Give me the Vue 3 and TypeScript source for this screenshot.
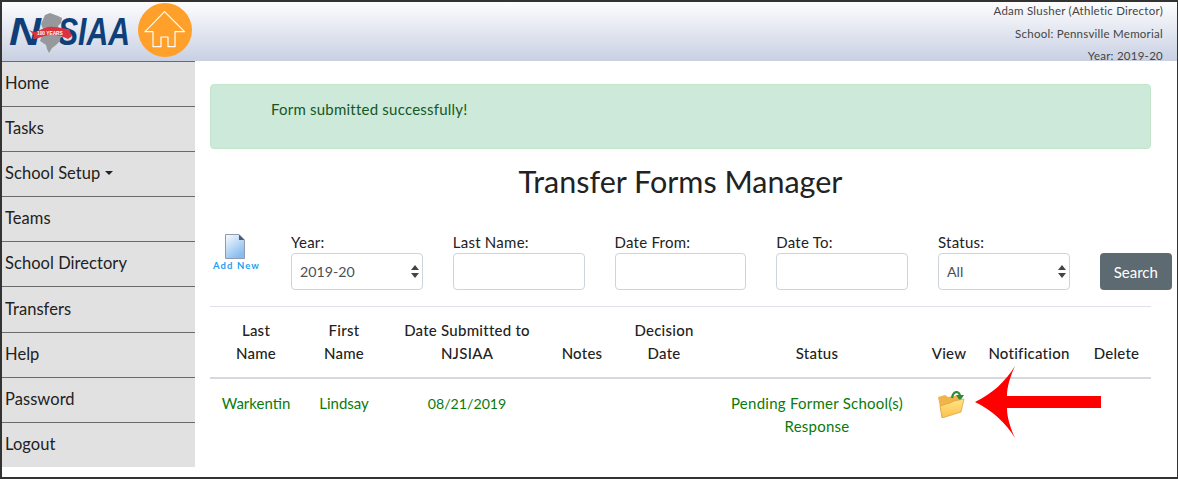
<script setup lang="ts">
const nav: string[] = ['Home', 'Tasks', 'School Setup', 'Teams', 'School Directory', 'Transfers', 'Help', 'Password', 'Logout']
const filters = [
  { label: 'Last Name' },
  { label: 'Date From' },
  { label: 'Date To' }
]
const heads: { lines: string[]; w: number }[] = [
  { lines: ['Last', 'Name'], w: 92 },
  { lines: ['First', 'Name'], w: 84 },
  { lines: ['Date Submitted to', 'NJSIAA'], w: 162 },
  { lines: ['Notes'], w: 68 },
  { lines: ['Decision', 'Date'], w: 96 },
  { lines: ['Status'], w: 210 },
  { lines: ['View'], w: 54 },
  { lines: ['Notification'], w: 106 },
  { lines: ['Delete'], w: 69 }
]
</script>

<template>
  <div class="frame">
    <header class="topbar">
      <div class="brand">
        <svg class="logo" width="124" height="42" viewBox="0 0 124 42">
          <text class="logo-text" x="0" y="33" textLength="32" lengthAdjust="spacingAndGlyphs">N</text>
          <text class="logo-text" x="49" y="33" textLength="72" lengthAdjust="spacingAndGlyphs">SIAA</text>
          <path class="state" d="M36 3 L41 1 L49 4 L53 6 L52 11 L49 14 L50 18 L52 22 L51 29 L47 33 L43 36 L40 41 L38 37 L37 33 L31 29 L33 23 L34 17 L32 12 Z" />
          <path class="ribbon" d="M20 18 L25 20 C32 19 36 14 44 15 C50 15 56 17 60 17 L63 24 L59 27 C54 25 48 22 42 23 C34 23 30 27 24 27 L25 23 Z" />
          <text class="ribbon-text" x="28" y="23">100 YEARS</text>
        </svg>
        <svg class="home" width="54" height="54" viewBox="0 0 54 54">
          <circle cx="27" cy="27" r="27" fill="#ffa02b" />
          <path d="M26.5 8.7 L46.5 28.7 H37 V43.7 H30 V34 H23 V43.7 H15 V28.7 H7 Z" fill="none" stroke="#fff" stroke-width="1.2" stroke-linejoin="round" />
        </svg>
      </div>
      <div class="user">
        <p>Adam Slusher (Athletic Director)</p>
        <p>School: Pennsville Memorial</p>
        <p>Year: 2019-20</p>
      </div>
    </header>
    <div class="body">
      <nav class="side">
        <a v-for="item in nav" :key="item" class="nav-item">
          {{ item }}<span v-if="item === 'School Setup'" class="caret"></span>
        </a>
      </nav>
      <main class="main">
        <div class="alert">Form submitted successfully!</div>
        <h1 class="title">Transfer Forms Manager</h1>
        <div class="filters">
          <a class="add">
            <svg width="20" height="25" viewBox="0 0 20 25">
              <defs>
                <linearGradient id="doc" x1="0" y1="0" x2=".6" y2="1">
                  <stop offset="0" stop-color="#fafcff" />
                  <stop offset="1" stop-color="#86bcee" />
                </linearGradient>
              </defs>
              <path d="M.5 .5 H14 L19.5 6 V24.5 H.5 Z" fill="url(#doc)" stroke="#8f9bb0" />
              <path d="M14 .5 V6 H19.5 Z" fill="#4f5a78" />
            </svg>
            <span>Add New</span>
          </a>
          <label class="field">
            <span>Year:</span>
            <span class="select-wrap">
              <select class="control"><option>2019-20</option></select>
              <svg class="updown" width="8" height="13" viewBox="0 0 8 13"><path d="M4 0 L8 5 H0 Z M0 8 H8 L4 13 Z" fill="#444" /></svg>
            </span>
          </label>
          <label v-for="f in filters" :key="f.label" class="field">
            <span>{{ f.label }}:</span>
            <input class="control" type="text" />
          </label>
          <label class="field">
            <span>Status:</span>
            <span class="select-wrap">
              <select class="control"><option>All</option></select>
              <svg class="updown" width="8" height="13" viewBox="0 0 8 13"><path d="M4 0 L8 5 H0 Z M0 8 H8 L4 13 Z" fill="#444" /></svg>
            </span>
          </label>
          <button class="search" type="button">Search</button>
        </div>
        <table class="grid">
          <colgroup>
            <col v-for="h in heads" :key="h.lines[0]" :style="{ width: h.w + 'px' }" />
          </colgroup>
          <thead>
            <tr>
              <th v-for="h in heads" :key="h.lines[0]">
                <template v-for="(l, i) in h.lines" :key="l"><br v-if="i" />{{ l }}</template>
              </th>
            </tr>
          </thead>
          <tbody>
            <tr>
              <td class="name">Warkentin</td>
              <td class="name">Lindsay</td>
              <td class="date">08/21/2019</td>
              <td></td>
              <td></td>
              <td>Pending Former School(s)<br />Response</td>
              <td class="view">
                <svg width="28" height="28" viewBox="0 0 28 28">
                  <defs>
                    <linearGradient id="fold" x1="0" y1="0" x2="0" y2="1">
                      <stop offset="0" stop-color="#ffe586" />
                      <stop offset="1" stop-color="#fcc04a" />
                    </linearGradient>
                  </defs>
                  <path d="M1 7 L8 5 L11 7 L22 5 L23 16 L5 27 Z" fill="#f0b44a" />
                  <path d="M15 8 C16 1 22 0 23 6" fill="none" stroke="#2f8a3b" stroke-width="2.2" />
                  <path d="M19 5 L27 5 L23 11 Z" fill="#2f8a3b" />
                  <path d="M3 16 L13 13 L17 11 L27 9 L24 22 L5 28 Z" fill="url(#fold)" stroke="#dba548" stroke-width=".8" />
                </svg>
              </td>
              <td></td>
              <td></td>
            </tr>
          </tbody>
        </table>
        <svg class="arrow" width="128" height="74" viewBox="0 0 128 74">
          <path d="M1 37 C18 29 32 16 41 1 C36 12 33 22 33 31 H127 V43 H33 C33 52 36 62 41 73 C32 58 18 45 1 37 Z" fill="#fe0000" />
        </svg>
      </main>
    </div>
  </div>
</template>

<style>
html, body { margin: 0; background: #fff; }
</style>

<style scoped>
* { box-sizing: border-box; }
.frame {
  width: 1178px; height: 479px; border: 2px solid #333; border-right-width: 1px;
  font-family: Lato, "Open Sans", sans-serif; color: #212529; overflow: hidden; background: #fff;
}
.topbar {
  height: 59px; display: flex; justify-content: space-between; overflow: hidden;
  background: linear-gradient(#fdfdfe, #c8d0e2);
}
.brand { display: flex; align-items: flex-start; }
.logo { margin: 10px 0 0 7px; }
.state { fill: #96989b; }
.logo-text { font: italic 700 38px "Liberation Sans", sans-serif; fill: #0e3f78; }
.ribbon { fill: #d9343f; }
.ribbon-text { font: 700 4.8px "Liberation Sans", sans-serif; fill: #fff; }
.home { margin: 1px 0 0 5px; }
.user { padding: 0 14px 0 0; text-align: right; font-size: 11.5px; letter-spacing: .25px; color: #444; }
.user p { margin: 0 0 4.6px; line-height: 18px; }
.body { display: flex; height: 416px; }
.side { width: 193px; flex: none; align-self: flex-start; background: #e1e1e1; }
.nav-item {
  display: flex; align-items: center; height: 45.1px; padding: 0 0 2px 3px;
  border-top: 1px solid #6a6a6a; font-size: 16.5px; letter-spacing: .05px; color: #222;
}
.caret {
  margin-left: 5px; border-top: 4.5px solid #222; border-left: 4.5px solid transparent; border-right: 4.5px solid transparent;
}
.main { position: relative; flex: 1; padding: 23px 27px 0 15px; }
.alert {
  height: 65px; padding: 14px 60px; background: #cde9d9; border: 1px solid #c3e6cb; border-radius: 4px;
  font-size: 15px; letter-spacing: .22px; line-height: 20px; color: #155724;
}
.title { margin: 13px 0 0; text-align: center; font-size: 30.5px; font-weight: 400; line-height: 38px; color: #222; }
.filters {
  display: flex; align-items: flex-start; height: 87px; margin: 19px -22px 0 0;
  padding-top: 13px; font-size: 15px; letter-spacing: .25px;
}
.add {
  width: 81px; flex: none; display: flex; flex-direction: column; align-items: flex-start; padding: 2px 0 0 3px;
  font-size: 9.5px; font-weight: 700; letter-spacing: 1.1px; color: #1e9ff2;
}
.add svg { margin: 0 0 1px 12px; }
.field { width: 131.75px; margin-right: 30px; flex: none; display: flex; flex-direction: column; }
.field > span:first-child { height: 21px; line-height: 20px; color: #222; }
.select-wrap { position: relative; display: block; }
.control {
  display: block; width: 100%; height: 37px; padding: 0 8px; border: 1px solid #ced4da; border-radius: 4px;
  background: #fff; font: inherit; font-size: 14.2px; letter-spacing: 0; color: #495057; appearance: none;
}
.updown { position: absolute; right: 4px; top: 12px; }
.search {
  width: 72px; height: 37px; margin: 21px 0 0 0; border: 0; border-radius: 4px;
  background: #5e6a72; color: #fff; font: inherit; font-size: 15px;
}
.grid { width: 941px; table-layout: fixed; border-collapse: collapse; border-top: 1px solid #dee2e6; font-size: 15px; letter-spacing: .25px; line-height: 23px; }
.grid th { padding: 12px 0 12px; border-bottom: 2px solid #d5d8dc; font-weight: 500; vertical-align: bottom; color: #222; text-align: center; }
.grid td { padding: 13px 0; text-align: center; vertical-align: top; color: #0a7a0a; }
.grid td.name { letter-spacing: 0; }
.grid td.date { font-size: 14.2px; letter-spacing: 0; }
.grid td.view { padding: 0; }
.view svg { display: block; margin: 11px 0 0 15px; }
.arrow { position: absolute; left: 779px; top: 304px; }
</style>
